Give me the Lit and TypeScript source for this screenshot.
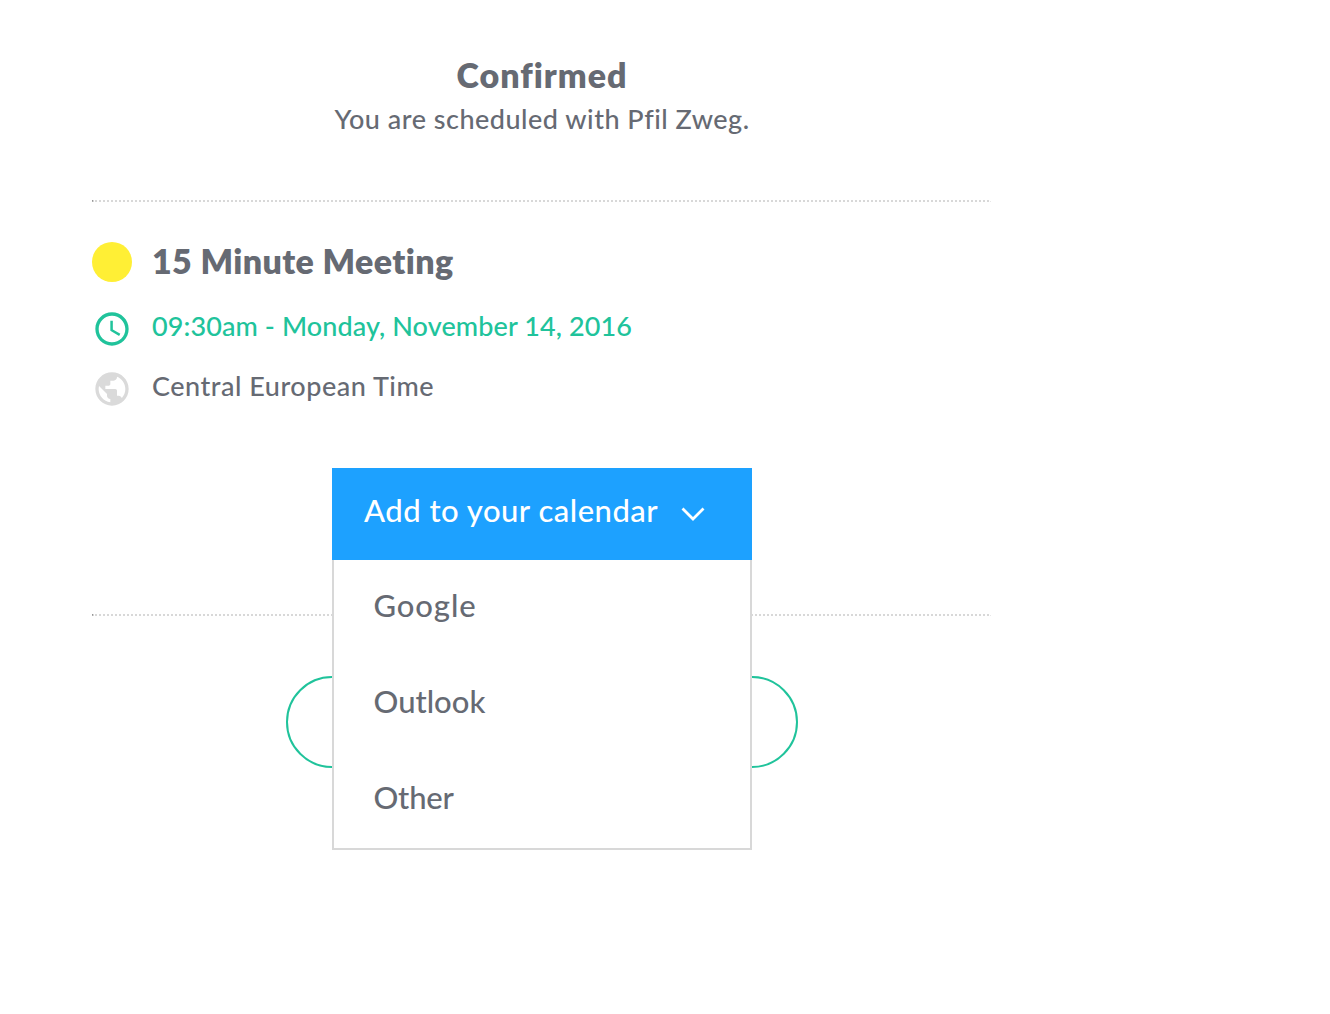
import { LitElement, html, css } from "lit";
import { customElement } from "lit/decorators.js";

@customElement("app-root")
export class AppRoot extends LitElement {
  static styles = css`
    :host {
      display: block;
      min-height: 1014px;
      background: #fff;
      color: #666a73;
      font-family: "Lato", "Liberation Sans", sans-serif;
      font-size: 27px;
      font-weight: 500;
      font-variant-ligatures: none;
    }
    .page {
      box-sizing: border-box;
      width: 900px;
      margin-left: 92px;
      padding-top: 53px;
    }
    .header {
      height: 147px;
      text-align: center;
    }
    .title,
    .name,
    .line {
      margin: 0;
      white-space: nowrap;
    }
    .title,
    .name {
      font-size: 34px;
      font-weight: 800;
      line-height: 44px;
    }
    .title {
      letter-spacing: 1px;
    }
    .name {
      align-self: start;
      margin-top: -1px;
      letter-spacing: 0.4px;
    }
    .subtitle {
      line-height: 43px;
      letter-spacing: 0.5px;
    }
    .rule {
      width: 899px;
      height: 2px;
      background:
        linear-gradient(#8c8c8c, #b4b4b4) 0 0 / 1px 2px no-repeat,
        linear-gradient(#d8d8d8, #d8d8d8) 0 0 / 2px 2px no-repeat,
        linear-gradient(#e8e8e8, #e8e8e8) 100% 100% / 1px 1px no-repeat,
        repeating-linear-gradient(90deg, #d8d8d8 0 2px, transparent 2px 4px) -1px 0 / 900px 2px no-repeat;
    }
    .details {
      display: grid;
      grid-template-columns: 40px auto;
      grid-template-rows: 56px 60px 60px;
      column-gap: 20px;
      align-items: center;
      align-content: start;
      box-sizing: border-box;
      height: 266px;
      padding-top: 38px;
    }
    .details .line {
      height: 60px;
      line-height: 60px;
    }
    .dot {
      align-self: start;
      width: 40px;
      height: 40px;
      margin-top: 2px;
      border-radius: 50%;
      background: #ffef35;
    }
    .icon {
      display: block;
      width: 40px;
      height: 40px;
      margin-top: 5px;
    }
    .clock {
      fill: #20c39b;
    }
    .globe {
      fill: #dadada;
    }
    .when {
      color: #20c39b;
      letter-spacing: 0.1px;
    }
    .zone {
      letter-spacing: 0.52px;
    }
    .calendar {
      position: relative;
      width: 420px;
      height: 146px;
      margin: 0 auto;
    }
    .toggle {
      display: flex;
      align-items: center;
      box-sizing: border-box;
      width: 420px;
      height: 92px;
      padding: 0 0 8px 32px;
      border: 0;
      background: #1da1ff;
      color: #fff;
      font: inherit;
      font-size: 31px;
      white-space: nowrap;
    }
    .label {
      width: 317px;
      text-align: left;
      letter-spacing: 0.5px;
    }
    .chevron {
      width: 24px;
      height: 16px;
      margin-top: 8px;
      fill: none;
      stroke: #fff;
      stroke-width: 2.8;
    }
    .menu {
      position: absolute;
      top: 92px;
      left: 0;
      z-index: 1;
      box-sizing: border-box;
      width: 420px;
      height: 290px;
      margin: 0;
      padding: 0 0 0 39.5px;
      list-style: none;
      background: #fff;
      border: 2px solid #d8d8d8;
      border-top: 0;
      font-size: 31px;
    }
    .item {
      height: 96px;
      line-height: 90px;
    }
    .item:first-child {
      letter-spacing: 0.9px;
    }
    .item:last-child {
      letter-spacing: -0.2px;
    }
    .pill {
      box-sizing: border-box;
      width: 512px;
      height: 92px;
      margin: 60px auto 0;
      border: 2px solid #20c39b;
      border-radius: 46px;
      background: #fff;
    }
  `;

  render() {
    return html`
      <main class="page">
        <header class="header">
          <h1 class="title">Confirmed</h1>
          <p class="line subtitle">You are scheduled with Pfil Zweg.</p>
        </header>
        <div class="rule"></div>
        <section class="details">
          <span class="dot"></span>
          <h2 class="name">15 Minute Meeting</h2>
          <svg class="icon clock" viewBox="0 0 24 24">
            <path d="M11.99 2C6.47 2 2 6.48 2 12s4.47 10 9.99 10C17.52 22 22 17.52 22 12S17.52 2 11.99 2zM12 20c-4.42 0-8-3.58-8-8s3.58-8 8-8 8 3.58 8 8-3.58 8-8 8zm.5-13H11v6l5.25 3.15.75-1.23-4.5-2.67z" />
          </svg>
          <p class="line when">09:30am - Monday, November 14, 2016</p>
          <svg class="icon globe" viewBox="0 0 24 24">
            <path d="M12 2C6.48 2 2 6.48 2 12s4.48 10 10 10 10-4.48 10-10S17.52 2 12 2zm-1 17.93c-3.95-.49-7-3.85-7-7.93 0-.62.08-1.21.21-1.79L9 15v1c0 1.1.9 2 2 2v1.93zm6.9-2.54c-.26-.81-1-1.39-1.9-1.39h-1v-3c0-.55-.45-1-1-1H8v-2h2c.55 0 1-.45 1-1V7h2c1.1 0 2-.9 2-2v-.41c2.93 1.19 5 4.06 5 7.41 0 2.08-.8 3.97-2.1 5.39z" />
          </svg>
          <p class="line zone">Central European Time</p>
        </section>
        <section class="calendar">
          <button class="toggle">
            <span class="label">Add to your calendar</span>
            <svg class="chevron" viewBox="0 0 24 16"><path d="M1.5 2.5l10.5 10.5 10.5-10.5" /></svg>
          </button>
          <ul class="menu">
            <li class="item">Google</li>
            <li class="item">Outlook</li>
            <li class="item">Other</li>
          </ul>
        </section>
        <div class="rule"></div>
        <div class="pill"></div>
      </main>
    `;
  }
}
